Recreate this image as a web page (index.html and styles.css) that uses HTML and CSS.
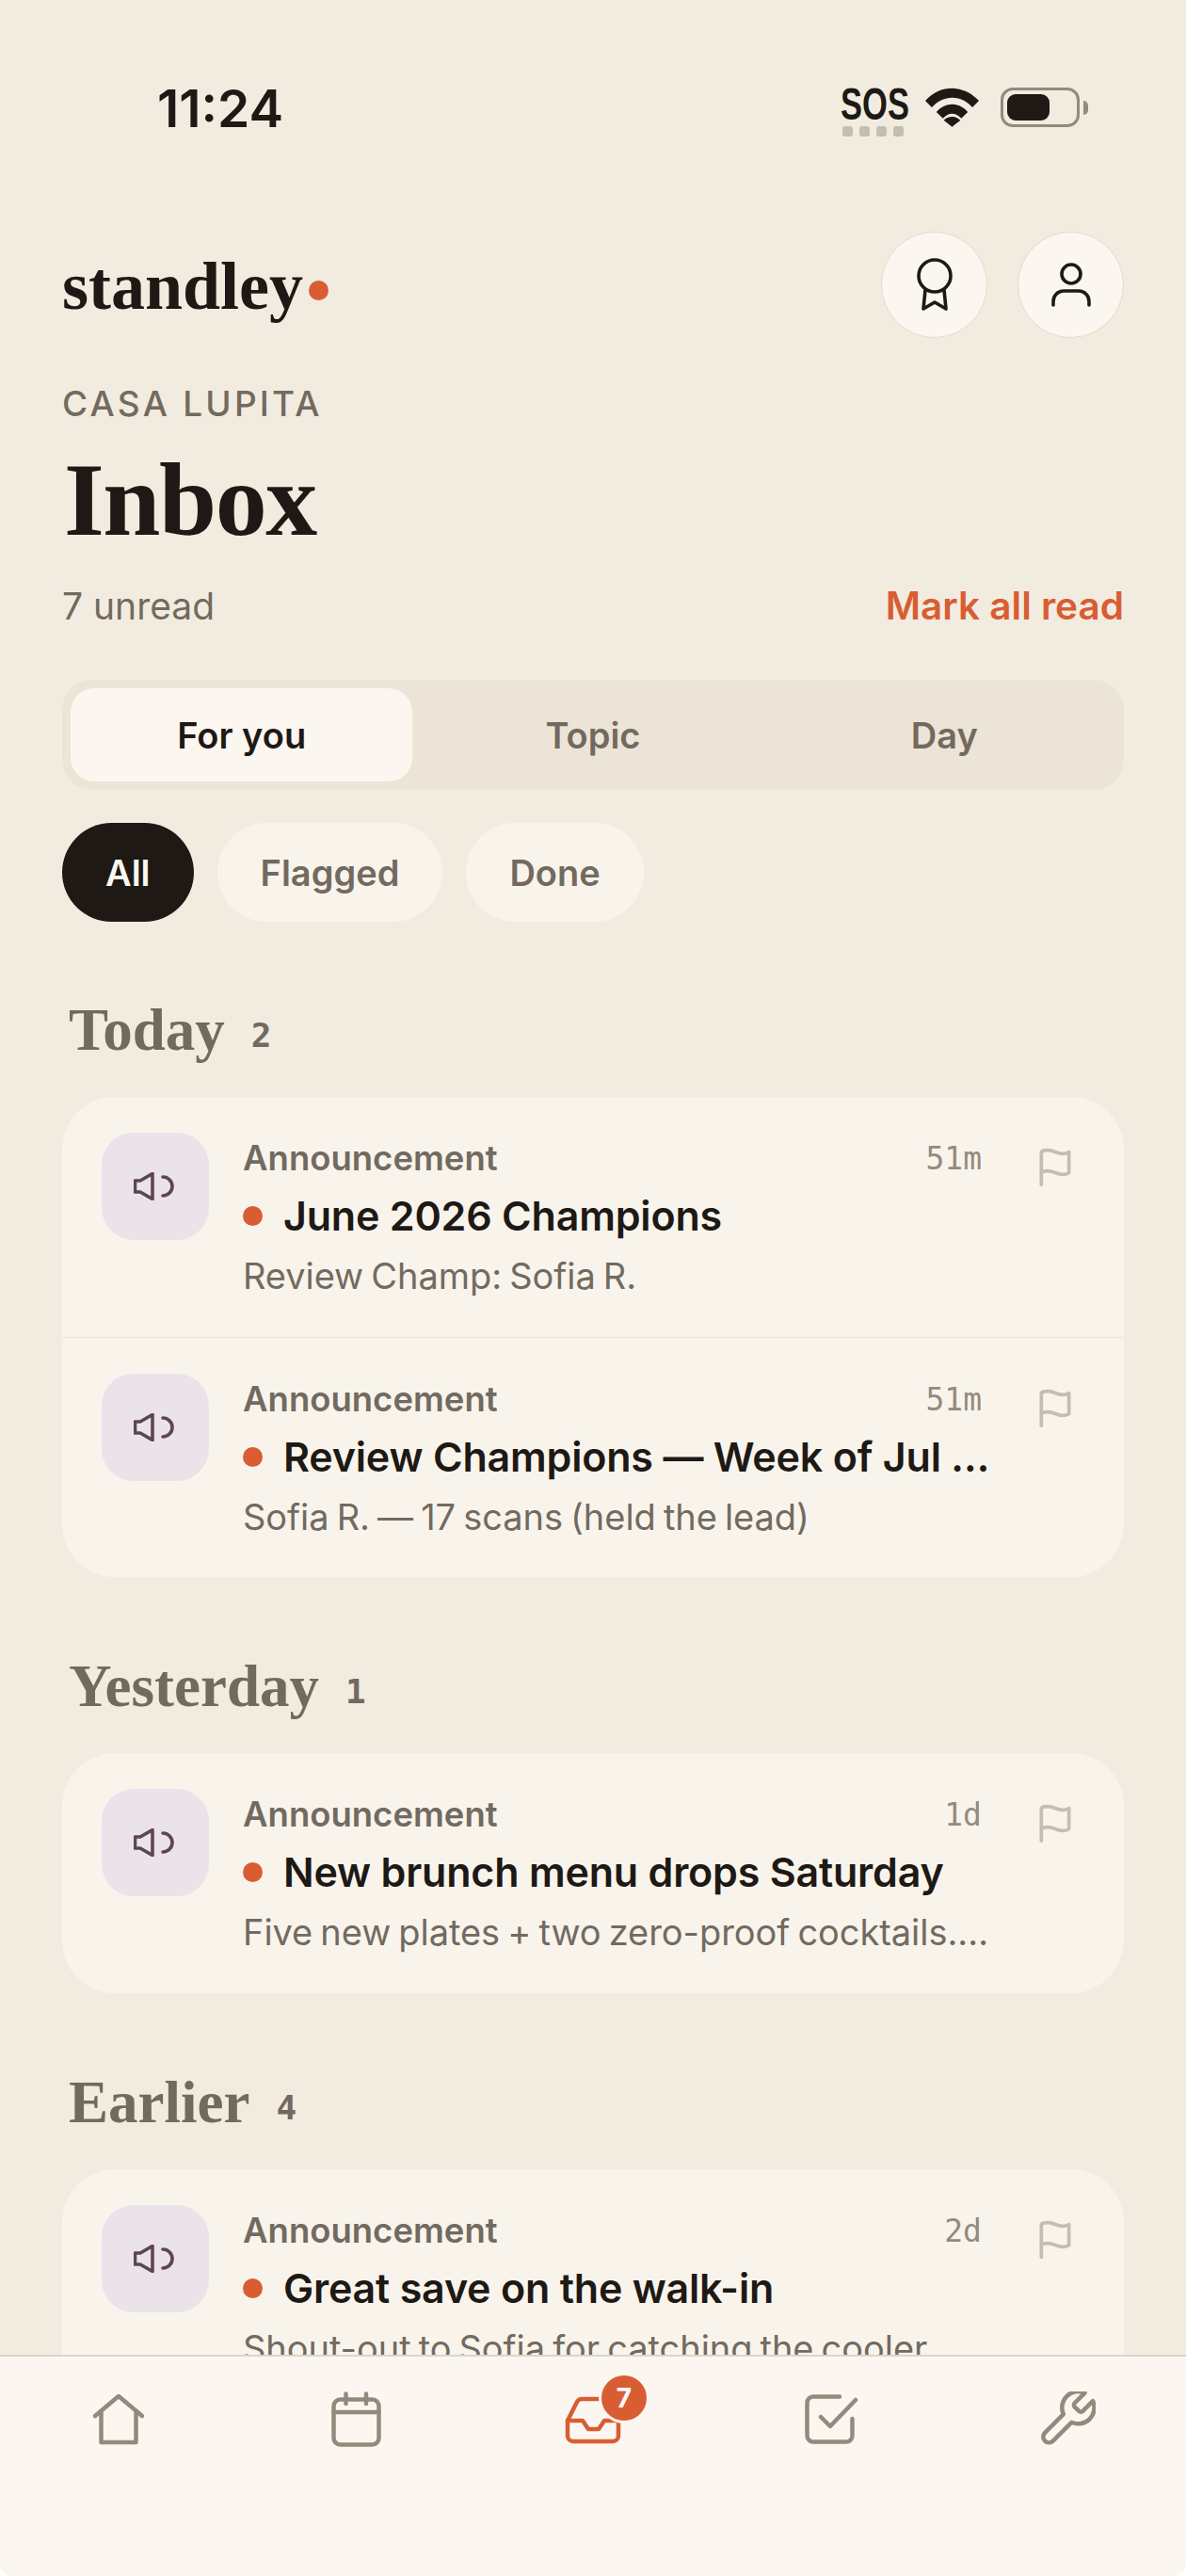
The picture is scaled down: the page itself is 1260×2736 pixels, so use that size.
FILE: index.html
```html
<!DOCTYPE html>
<html lang="en">
<head>
  <meta charset="UTF-8" />
  <meta name="viewport" content="width=device-width, initial-scale=1.0"/>
  <title>Standley - Inbox</title>
  <link rel="stylesheet" href="styles.css">
</head>
<body>

  <div class="screen">
    <div class="scroll">
      <div class="status-bar">
        <span class="clock">11:24</span>
        <div class="status-right">
          <div class="sos">
            <span class="sos-text">SOS</span>
            <span class="sos-dots"><i></i><i></i><i></i><i></i></span>
          </div>
          <svg class="wifi" viewBox="0 0 58 42"><path d="M0 14 C16 -4 42 -4 58 14 L51 21 C38 7 20 7 7 21Z M12 26 C22 15 36 15 46 26 L39 33 C33 26 25 26 19 33Z M20 35 C25 30 33 30 38 35 L29 42Z" fill="#1e1915"/></svg>
          <div class="battery"><div class="battery-fill"></div></div>
          <div class="battery-tip"></div>
        </div>
      </div>

      <header class="top">
        <div class="logo">standley<span class="logo-dot"></span></div>
        <div class="top-actions">
          <button class="round-btn">
            <svg class="icon award" viewBox="0 0 44 58"><circle cx="22" cy="20" r="17"/><path d="M12 35 10 55 22 48 34 55 32 35"/></svg>
          </button>
          <button class="round-btn">
            <svg class="icon person" viewBox="0 0 46 48"><circle cx="23" cy="13" r="10"/><path d="M4 46v-4a11 11 0 0 1 11-11h16a11 11 0 0 1 11 11v4"/></svg>
          </button>
        </div>
      </header>

      <div class="place">CASA LUPITA</div>
      <h1 class="title">Inbox</h1>
      <div class="unread-row">
        <span class="unread">7 unread</span>
        <span class="mark-read">Mark all read</span>
      </div>

      <div class="tabs">
        <div class="tab active">For you</div>
        <div class="tab">Topic</div>
        <div class="tab">Day</div>
      </div>

      <div class="chips">
        <div class="chip on">All</div>
        <div class="chip">Flagged</div>
        <div class="chip">Done</div>
      </div>

      <section class="group">
        <h2 class="group-head">Today <span class="count">2</span></h2>
        <div class="card">
          <div class="row">
            <div class="tile"><svg class="icon horn" viewBox="0 0 44 30"><path d="M1.5 9H7L20 1.5v27L7 21H1.5z"/><path d="M31 5a10 10 0 0 1 0 20"/></svg></div>
            <div class="row-body">
              <div class="row-meta"><span class="kind">Announcement</span><span class="age">51m</span></div>
              <div class="row-title"><span class="dot"></span><span class="row-text">June 2026 Champions</span></div>
              <div class="row-sub">Review Champ: Sofia R.</div>
            </div>
            <svg class="icon flag" viewBox="0 0 24 24"><path d="M4 15s1-1 4-1 5 2 8 2 4-1 4-1V3s-1 1-4 1-5-2-8-2-4 1-4 1z"/><path d="M4 22v-7"/></svg>
          </div>
          <div class="row">
            <div class="tile"><svg class="icon horn" viewBox="0 0 44 30"><path d="M1.5 9H7L20 1.5v27L7 21H1.5z"/><path d="M31 5a10 10 0 0 1 0 20"/></svg></div>
            <div class="row-body">
              <div class="row-meta"><span class="kind">Announcement</span><span class="age">51m</span></div>
              <div class="row-title"><span class="dot"></span><span class="row-text">Review Champions — Week of Jul …</span></div>
              <div class="row-sub">Sofia R. — 17 scans (held the lead)</div>
            </div>
            <svg class="icon flag" viewBox="0 0 24 24"><path d="M4 15s1-1 4-1 5 2 8 2 4-1 4-1V3s-1 1-4 1-5-2-8-2-4 1-4 1z"/><path d="M4 22v-7"/></svg>
          </div>
        </div>
      </section>

      <section class="group">
        <h2 class="group-head">Yesterday <span class="count">1</span></h2>
        <div class="card">
          <div class="row">
            <div class="tile"><svg class="icon horn" viewBox="0 0 44 30"><path d="M1.5 9H7L20 1.5v27L7 21H1.5z"/><path d="M31 5a10 10 0 0 1 0 20"/></svg></div>
            <div class="row-body">
              <div class="row-meta"><span class="kind">Announcement</span><span class="age">1d</span></div>
              <div class="row-title"><span class="dot"></span><span class="row-text">New brunch menu drops Saturday</span></div>
              <div class="row-sub">Five new plates + two zero-proof cocktails.…</div>
            </div>
            <svg class="icon flag" viewBox="0 0 24 24"><path d="M4 15s1-1 4-1 5 2 8 2 4-1 4-1V3s-1 1-4 1-5-2-8-2-4 1-4 1z"/><path d="M4 22v-7"/></svg>
          </div>
        </div>
      </section>

      <section class="group">
        <h2 class="group-head">Earlier <span class="count">4</span></h2>
        <div class="card">
          <div class="row">
            <div class="tile"><svg class="icon horn" viewBox="0 0 44 30"><path d="M1.5 9H7L20 1.5v27L7 21H1.5z"/><path d="M31 5a10 10 0 0 1 0 20"/></svg></div>
            <div class="row-body">
              <div class="row-meta"><span class="kind">Announcement</span><span class="age">2d</span></div>
              <div class="row-title"><span class="dot"></span><span class="row-text">Great save on the walk-in</span></div>
              <div class="row-sub">Shout-out to Sofia for catching the cooler</div>
            </div>
            <svg class="icon flag" viewBox="0 0 24 24"><path d="M4 15s1-1 4-1 5 2 8 2 4-1 4-1V3s-1 1-4 1-5-2-8-2-4 1-4 1z"/><path d="M4 22v-7"/></svg>
          </div>
        </div>
      </section>
    </div>

    <nav class="tabbar">
      <div class="nav-item"><svg class="icon" viewBox="0 0 60 60"><path d="M5 26 30 5l25 21"/><path d="M11.5 21v33h37V21"/></svg></div>
      <div class="nav-item"><svg class="icon" viewBox="0 0 60 60"><rect x="6.5" y="8.5" width="48" height="48" rx="7"/><path d="M19.5 2.500v10.500"/><path d="M41 2.500v10.500"/><path d="M6.500 22h48"/></svg></div>
      <div class="nav-item current">
        <svg class="icon" viewBox="0 0 60 60"><path d="M3 31h16l6 9h11l6-9h15"/><path d="M13 11 3 31v16a6 6 0 0 0 6 6h42a6 6 0 0 0 6-6V31L47 11a6 6 0 0 0-5-3H18a6 6 0 0 0-5 3z"/></svg>
        <span class="badge">7</span>
      </div>
      <div class="nav-item"><svg class="icon" viewBox="0 0 60 60"><path d="M40 5.500H12A6.500 6.500 0 0 0 5.500 12v35a6.500 6.500 0 0 0 6.500 6.500h35a6.500 6.500 0 0 0 6.500-6.500V29"/><path d="m20 27 10 10L57 9"/></svg></div>
      <div class="nav-item"><svg class="icon wrench" viewBox="1.500 2 21 21"><path d="M14.700 6.300a1 1 0 0 0 0 1.400l1.600 1.600a1 1 0 0 0 1.400 0l3.770-3.770a6 6 0 0 1-7.940 7.940l-6.910 6.910a2.120 2.120 0 0 1-3-3l6.910-6.910a6 6 0 0 1 7.940-7.940l-3.760 3.760z"/></svg></div>
    </nav>
  </div>

</body>
</html>
```

FILE: styles.css
```css
:root {
  --bg: #f2ece0;
  --card: #f8f4ec;
  --paper: #fbf7f0;
  --ink: #1e1915;
  --muted: #736a5f;
  --soft: #938a7e;
  --faint: #c4bdb1;
  --accent: #d95d33;
  --line: #ece4d6;
  --tile: #ebe3ea;
  --plum: #5e4552;
  --serif: "Liberation Serif", serif;
  --sans: Inter, "Liberation Sans", sans-serif;
}

* {
  box-sizing: border-box;
}

html, body {
  margin: 0;
  height: 100%;
}

body {
  font-family: var(--sans);
  background: #fff;
  color: var(--ink);
}

.screen {
  height: 2736px;
  display: flex;
  flex-direction: column;
  overflow: hidden;
  background: var(--bg);
  border-radius: 0 0 14px 14px;
}

.scroll {
  flex: 1;
  min-height: 0;
  overflow: hidden;
  padding: 0 66px;
}

.icon {
  fill: none;
  stroke: currentColor;
  stroke-width: 2;
  stroke-linecap: round;
  stroke-linejoin: round;
}

/* status bar */
.status-bar {
  height: 238px;
  padding: 85px 38px 0 101px;
  display: flex;
  justify-content: space-between;
  align-items: flex-start;
}

.clock {
  font-size: 55px;
  line-height: 60px;
  font-weight: 600;
}

.status-right {
  display: flex;
  align-items: flex-start;
  margin-top: 8px;
}

.sos {
  width: 70px;
  margin-right: 20px;
}

.sos-text {
  display: block;
  font-family: "Liberation Sans", sans-serif;
  font-size: 48px;
  line-height: 35px;
  font-weight: 700;
  transform: scaleX(0.72);
  transform-origin: left center;
  white-space: nowrap;
}

.sos-dots {
  display: flex;
  gap: 7px;
  padding-left: 2px;
  margin-top: 6px;
}

.sos-dots i {
  width: 11px;
  height: 11px;
  border-radius: 3px;
  background: var(--faint);
}

.wifi {
  width: 57px;
  height: 42px;
  margin-right: 23px;
}

.battery {
  width: 84px;
  height: 42px;
  border: 3px solid var(--soft);
  border-radius: 13px;
  padding: 4px;
}

.battery-fill {
  width: 45px;
  height: 28px;
  background: var(--ink);
  border-radius: 9px;
}

.battery-tip {
  width: 5px;
  height: 15px;
  margin: 14px 0 0 4px;
  background: var(--soft);
  border-radius: 0 5px 5px 0;
}

/* header */
.top {
  display: flex;
  justify-content: space-between;
  align-items: center;
  height: 128px;
}

.logo {
  font-family: var(--serif);
  font-size: 72px;
  font-weight: 700;
  display: flex;
  align-items: center;
  margin-top: 4px;
}

.logo-dot {
  width: 21px;
  height: 21px;
  margin: 8px 0 0 6px;
  border-radius: 50%;
  background: var(--accent);
}

.top-actions {
  display: flex;
  gap: 32px;
}

.round-btn {
  width: 113px;
  height: 113px;
  padding: 0;
  border-radius: 50%;
  border: 1px solid #e3dbce;
  background: var(--paper);
  color: var(--ink);
  display: flex;
  align-items: center;
  justify-content: center;
}

.round-btn .icon {
  stroke-width: 3.6;
}

.award {
  width: 44px;
  height: 58px;
}

.person {
  width: 46px;
  height: 48px;
}

.place {
  margin-top: 41px;
  font-size: 37px;
  line-height: 44px;
  font-weight: 500;
  letter-spacing: 3.200px;
  color: var(--muted);
}

.title {
  margin: 20px 0 0 2px;
  font-family: var(--serif);
  font-size: 110px;
  line-height: 120px;
  font-weight: 700;
  letter-spacing: -1.500px;
}

.unread-row {
  display: flex;
  justify-content: space-between;
  align-items: center;
  margin-top: 28px;
  font-size: 39px;
  line-height: 50px;
}

.unread {
  color: var(--muted);
}

.mark-read {
  color: var(--accent);
  font-size: 40.500px;
  font-weight: 600;
}

/* tabs and chips */
.tabs {
  margin-top: 53px;
  height: 117px;
  padding: 9px;
  display: grid;
  grid-template-columns: repeat(3, 1fr);
  gap: 10px;
  background: #ece4d6;
  border-radius: 32px;
}

.tab {
  display: flex;
  align-items: center;
  justify-content: center;
  font-size: 38px;
  font-weight: 600;
  color: var(--muted);
  border-radius: 25px;
}

.tab.active {
  background: var(--paper);
  color: var(--ink);
}

.chips {
  display: flex;
  gap: 25px;
  margin-top: 35px;
}

.chip {
  height: 105px;
  padding: 0 46px;
  display: flex;
  align-items: center;
  border-radius: 53px;
  font-size: 38px;
  font-weight: 600;
  color: var(--muted);
  background: var(--card);
}

.chip.on {
  background: var(--ink);
  color: var(--paper);
}

/* groups */
.group {
  margin-top: 85px;
}

.group + .group {
  margin-top: 86px;
}

.group-head {
  margin: 0 0 41px 7px;
  height: 60px;
  display: flex;
  align-items: center;
  gap: 28px;
  font-family: var(--serif);
  font-size: 63px;
  font-weight: 700;
  color: var(--muted);
}

.count {
  font-family: "DejaVu Sans Mono", monospace;
  font-size: 36px;
  font-weight: 700;
  margin-top: 10px;
}

.card {
  background: var(--card);
  border-radius: 56px;
}

.row {
  display: flex;
  height: 255px;
  padding: 38px 42px 0;
  align-items: flex-start;
}

.row + .row {
  border-top: 1px solid var(--line);
}

.tile {
  flex: none;
  width: 114px;
  height: 114px;
  border-radius: 34px;
  background: var(--tile);
  color: var(--plum);
  display: flex;
  align-items: center;
  justify-content: center;
}

.horn {
  width: 44px;
  height: 30px;
  margin-left: -3px;
  stroke-width: 3.600;
}

.row-body {
  flex: 1;
  min-width: 0;
  margin-left: 36px;
  margin-right: 56px;
}

.row-meta {
  display: flex;
  justify-content: space-between;
  align-items: center;
  height: 50px;
  margin-top: 2px;
}

.kind {
  font-size: 36.500px;
  font-weight: 600;
  color: var(--muted);
}

.age {
  font-family: "DejaVu Sans Mono", monospace;
  font-size: 33px;
  color: var(--soft);
}

.row-title {
  display: flex;
  align-items: center;
  gap: 22px;
  margin-top: 11px;
  height: 50px;
  font-size: 43px;
  font-weight: 600;
  letter-spacing: -0.200px;
}

.dot {
  flex: none;
  width: 21px;
  height: 21px;
  border-radius: 50%;
  background: var(--accent);
}

.row-text {
  white-space: nowrap;
}

.row-sub {
  margin-top: 14px;
  font-size: 38px;
  line-height: 50px;
  letter-spacing: -0.050px;
  word-spacing: -2.500px;
  color: var(--muted);
  white-space: nowrap;
}

.flag {
  flex: none;
  width: 44px;
  height: 44px;
  margin: 15px 9px 0 0;
  color: var(--faint);
}

/* bottom nav */
.tabbar {
  flex: none;
  height: 235px;
  padding: 37px 0 0;
  display: grid;
  grid-template-columns: repeat(5, 1fr);
  justify-items: center;
  align-items: start;
  background: var(--paper);
  border-top: 2px solid #dcd5c9;
}

.nav-item {
  position: relative;
  width: 60px;
  height: 60px;
  color: var(--soft);
}

.nav-item .icon {
  display: block;
  width: 60px;
  height: 60px;
  stroke-width: 4.500;
}

.nav-item .wrench {
  stroke-width: 1.600;
}

.nav-item.current {
  color: var(--accent);
}

.badge {
  position: absolute;
  top: -17px;
  right: -27px;
  width: 48px;
  height: 48px;
  border-radius: 50%;
  background: var(--accent);
  box-shadow: 0 0 0 3px var(--paper);
  color: #fff;
  font-size: 28px;
  font-weight: 700;
  display: flex;
  align-items: center;
  justify-content: center;
}
```
